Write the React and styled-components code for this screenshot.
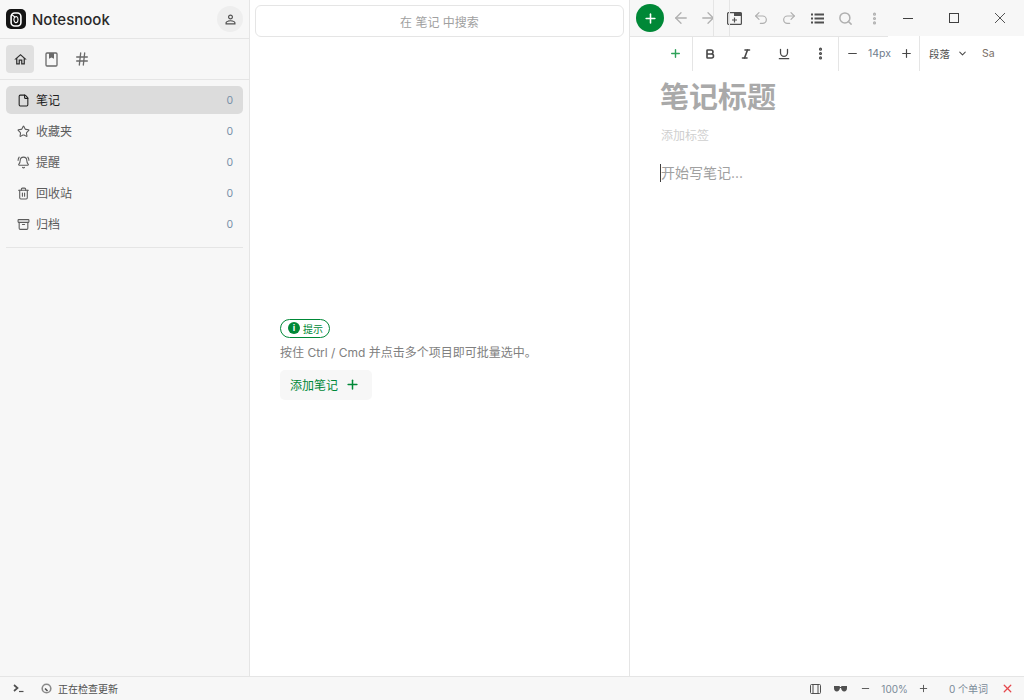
import React from 'react'
import styled, { createGlobalStyle } from 'styled-components'
import {
  Plus, ArrowLeft, ArrowRight, Undo2, Redo2, Search, EllipsisVertical, Minus, X,
  Bold, Italic, Underline, ChevronDown, Hash, File, Star, BellRing, Trash2, Archive,
} from 'lucide-react'

const GlobalStyle = createGlobalStyle`
  html, body, #root { height: 100%; margin: 0; }
  body {
    font-family: Inter, "Noto Sans CJK SC", sans-serif;
    background: #fff;
    overflow: hidden;
  }
`

const Page = styled.div`
  display: grid;
  grid-template-rows: 1fr 24px;
  height: 700px;
  width: 1024px;
`

const Main = styled.div`
  display: grid;
  grid-template-columns: 250px 380px 394px;
  min-height: 0;
`

const Sidebar = styled.aside`
  background: #f7f7f7;
  border-right: 1px solid #e5e5e5;
  display: flex;
  flex-direction: column;
`

const Header = styled.div`
  height: 38px;
  border-bottom: 1px solid #e5e5e5;
  display: flex;
  align-items: center;
  padding: 0 6px 0 6px;
`

const Logo = styled.div`
  width: 20px;
  height: 20px;
  border-radius: 5px;
  background: #141414;
  display: flex;
  align-items: center;
  justify-content: center;
`

const Brand = styled.div`
  font-size: 15px;
  font-weight: 500;
  color: #2a2a2a;
  margin-left: 6px;
  flex: 1;
`

const Avatar = styled.div`
  width: 26px;
  height: 26px;
  border-radius: 50%;
  background: #eeeeee;
  color: #505050;
  display: flex;
  align-items: center;
  justify-content: center;
`

const Tabs = styled.div`
  height: 40px;
  border-bottom: 1px solid #e5e5e5;
  display: flex;
  align-items: center;
  padding: 0 6px;
  gap: 3px;
`

const Tab = styled.div`
  width: 28px;
  height: 28px;
  border-radius: 4px;
  background: ${({ $active }) => ($active ? '#e0e0e0' : 'transparent')};
  color: ${({ $active }) => ($active ? '#303030' : '#6a6a6a')};
  display: flex;
  align-items: center;
  justify-content: center;
`

const Nav = styled.nav`
  margin: 6px 6px 0;
  padding-bottom: 9px;
  border-bottom: 1px solid #e5e5e5;
  display: flex;
  flex-direction: column;
  gap: 3px;
`

const NavRow = styled.div`
  height: 28px;
  border-radius: 5px;
  background: ${({ $active }) => ($active ? '#dcdcdc' : 'transparent')};
  color: ${({ $active }) => ($active ? '#202020' : '#5c5c5c')};
  display: flex;
  align-items: center;
  padding: 0 10px 0 11px;
  font-size: 12px;
  gap: 6px;
`

const NavIcon = styled.span`
  width: 13px;
  display: flex;
  justify-content: center;
`

const NavLabel = styled.span`
  flex: 1;
  padding-bottom: 2px;
`

const Count = styled.span`
  font-size: 10.5px;
  color: #7890a8;
`

const ListPane = styled.section`
  border-right: 1px solid #e5e5e5;
  display: flex;
  flex-direction: column;
`

const SearchBox = styled.div`
  margin: 5px 5px 0;
  height: 30px;
  border: 1px solid #e5e5e5;
  border-radius: 6px;
  display: flex;
  align-items: center;
  justify-content: center;
  font-size: 12px;
  color: #a0a0a0;
`

const Hint = styled.div`
  flex: 1;
  display: flex;
  flex-direction: column;
  align-items: flex-start;
  justify-content: center;
  padding: 0 30px 0;
  margin-top: 5px;
`

const Badge = styled.div`
  height: 17px;
  border: 1px solid #008837;
  border-radius: 10px;
  padding: 0 6px 0 7px;
  display: flex;
  align-items: center;
  gap: 3px;
  font-size: 10px;
  color: #008837;
`

const InfoDot = styled.span`
  width: 12px;
  height: 12px;
  border-radius: 50%;
  background: #008837;
  color: #fff;
  font-size: 9px;
  font-weight: 700;
  line-height: 12px;
  text-align: center;
`

const HintText = styled.p`
  margin: 7px 0 9px;
  font-size: 12px;
  line-height: 16px;
  color: #808080;
`

const AddButton = styled.div`
  height: 30px;
  padding: 0 12px 0 10px;
  background: #f7f7f7;
  border-radius: 5px;
  display: flex;
  align-items: center;
  gap: 7px;
  font-size: 12px;
  color: #008837;
`

const Editor = styled.section`
  display: flex;
  flex-direction: column;
  position: relative;
`

const TopBar = styled.div`
  height: 36px;
  background: #f7f7f7;
  display: flex;
  align-items: center;
  padding-left: 6px;
`

const NewNote = styled.div`
  width: 28px;
  height: 28px;
  flex-shrink: 0;
  border-radius: 50%;
  background: #008837;
  color: #fff;
  display: flex;
  align-items: center;
  justify-content: center;
  margin-right: 3px;
`

const ToolGroup = styled.div`
  width: 258px;
  height: 37px;
  flex-shrink: 0;
  display: flex;
  align-items: center;
  border-bottom: 1px solid #e5e5e5;
  align-self: flex-start;
  margin-left: -37px;
  padding-left: 37px;
  box-sizing: border-box;
`

const TopIcon = styled.div`
  width: ${({ $w }) => $w || 28}px;
  display: flex;
  justify-content: center;
  color: ${({ $dark }) => ($dark ? '#505050' : '#b0b0b0')};
`

const Rails = styled.div`
  position: absolute;
  left: 83px;
  top: 0;
  width: 15px;
  height: 36px;
  border-left: 1px solid #e5e5e5;
  border-right: 1px solid #e5e5e5;
`

const WinControls = styled.div`
  display: flex;
  flex-shrink: 0;
  margin-left: -3px;
`

const WinButton = styled.div`
  width: 46px;
  height: 36px;
  display: flex;
  align-items: center;
  justify-content: center;
  color: #404040;
`

const FormatBar = styled.div`
  height: 35px;
  display: flex;
  align-items: center;
  font-size: 10.5px;
  color: #505050;
`

const FormatGroup = styled.div`
  height: 100%;
  display: flex;
  align-items: center;
  width: ${({ $w }) => $w}px;
  border-right: ${({ $end }) => ($end ? 'none' : '1px solid #e5e5e5')};
  padding-left: ${({ $pad }) => $pad || 0}px;
  box-sizing: border-box;
`

const FormatIcon = styled.div`
  width: ${({ $w }) => $w || 37}px;
  display: flex;
  justify-content: center;
  color: ${({ $green }) => ($green ? '#2fa25a' : '#484848')};
`

const SizeLabel = styled.span`
  width: 28px;
  text-align: center;
  color: #6f7c8c;
`

const FontLabel = styled.span`
  margin-left: 8px;
  color: #7a6f68;
`

const Body = styled.div`
  padding: 8px 30px 0;
  display: flex;
  flex-direction: column;
  align-items: flex-start;
`

const Title = styled.h1`
  margin: 0;
  font-size: 29px;
  line-height: 38px;
  font-weight: 700;
  color: #a9a9a9;
`

const Tags = styled.div`
  margin: 11px 0 0 1px;
  font-size: 12px;
  line-height: 16px;
  color: #cfcfcf;
`

const Placeholder = styled.div`
  margin-top: 20px;
  font-size: 14px;
  line-height: 18px;
  color: #a0a0a0;
  border-left: 1px solid #404040;
`

const StatusBar = styled.footer`
  background: #f7f7f7;
  border-top: 1px solid #e5e5e5;
  box-sizing: border-box;
  display: flex;
  align-items: center;
  padding: 0 10px 0 13px;
  font-size: 10px;
  color: #505050;
`

const StatusItem = styled.div`
  display: flex;
  align-items: center;
  gap: 6px;
  margin-left: ${({ $gap }) => $gap || 0}px;
  color: ${({ $tone }) => $tone || 'inherit'};
`

const Spacer = styled.div`
  flex: 1;
`

const navItems = [
  { label: '笔记', icon: File, active: true },
  { label: '收藏夹', icon: Star },
  { label: '提醒', icon: BellRing },
  { label: '回收站', icon: Trash2 },
  { label: '归档', icon: Archive },
]

const HomeIcon = () => (
  <svg width="15" height="15" viewBox="0 0 24 24" fill="currentColor">
    <path d="M12 5.69l5 4.5V18h-2v-6H9v6H7v-7.81l5-4.5M12 3L2 12h3v8h6v-6h2v6h6v-8h3L12 3z" />
  </svg>
)

const PersonIcon = () => (
  <svg width="15" height="15" viewBox="0 0 24 24" fill="currentColor">
    <path d="M12 5.9a2.1 2.1 0 110 4.2 2.1 2.1 0 010-4.2m0 9c2.97 0 6.1 1.46 6.1 2.1v1.1H5.9V17c0-.64 3.13-2.1 6.1-2.1M12 4C9.79 4 8 5.79 8 8s1.79 4 4 4 4-1.79 4-4-1.79-4-4-4zm0 9c-2.67 0-8 1.34-8 4v3h16v-3c0-2.66-5.33-4-8-4z" />
  </svg>
)

const BookIcon = () => (
  <svg width="13" height="15" viewBox="0 0 13 15" fill="none" stroke="currentColor" strokeWidth="1.3">
    <rect x="1" y="1" width="11" height="13" rx="1" />
    <path d="M4 1h5v5.8L6.500 5.500 4 6.800z" fill="currentColor" stroke="none" />
  </svg>
)

const TabPlusIcon = () => (
  <svg width="15" height="13" viewBox="0 0 15 13" fill="none" stroke="currentColor" strokeWidth="1.2">
    <rect x="0.6" y="0.6" width="13.800" height="11.800" rx="1" />
    <path d="M7 0.600h7.400V4H7z" fill="currentColor" stroke="none" />
    <path d="M7.500 5.500v5M5 8h5" />
  </svg>
)

const BulletListIcon = () => (
  <svg width="13" height="11" viewBox="0 0 13 11" fill="currentColor">
    <rect x="0" y="0.500" width="2" height="2" />
    <rect x="3.500" y="0.500" width="9.500" height="2" />
    <rect x="0" y="4.500" width="2" height="2" />
    <rect x="3.500" y="4.500" width="9.500" height="2" />
    <rect x="0" y="8.500" width="2" height="2" />
    <rect x="3.500" y="8.500" width="9.500" height="2" />
  </svg>
)

const LogoMark = () => (
  <svg width="12" height="15" viewBox="0 0 12 15" fill="none" stroke="#fff">
    <rect x="1.100" y="1" width="9.800" height="13" rx="3.500" strokeWidth="1.600" />
    <path d="M1.500 2.500L5 5c-1.500 1-1.500 4 0 5.200 1.500 1 3 0 3-2.700S6.500 4 5 5" strokeWidth="1.100" />
  </svg>
)

const WinMin = () => (
  <svg width="10" height="10" viewBox="0 0 10 10" stroke="currentColor" shapeRendering="crispEdges">
    <path d="M0 5.500h10" />
  </svg>
)

const WinMax = () => (
  <svg width="10" height="10" viewBox="0 0 10 10" fill="none" stroke="currentColor" shapeRendering="crispEdges">
    <rect x="0.500" y="0.500" width="9" height="9" />
  </svg>
)

const WinClose = () => (
  <svg width="10" height="10" viewBox="0 0 10 10" fill="none" stroke="currentColor" strokeWidth="0.9">
    <path d="M0 0l10 10M10 0L0 10" />
  </svg>
)

const ConsoleIcon = () => (
  <svg width="11" height="9" viewBox="0 0 11 9" fill="none" stroke="currentColor" strokeWidth="1.700">
    <path d="M1 1l3.500 3L1 7" />
    <path d="M6 7.500h4.500" strokeWidth="1.200" />
  </svg>
)

const UpdateIcon = () => (
  <svg width="11" height="11" viewBox="0 0 11 11" fill="none" stroke="#8a8a8a" strokeWidth="1.600">
    <circle cx="5.500" cy="5.500" r="4.300" />
    <path d="M4 5.500l2.500 2.500" stroke="#505050" />
  </svg>
)

const PaneIcon = () => (
  <svg width="11" height="10" viewBox="0 0 11 10" fill="none" stroke="currentColor">
    <rect x="0.500" y="0.500" width="10" height="9" rx="1" />
    <path d="M3 1v8M8 1v8" />
  </svg>
)

const ShadesIcon = () => (
  <svg width="13" height="7" viewBox="0 0 13 7" fill="currentColor">
    <path d="M0 1h5.500l.5 1h1l.5-1H13v2c0 2-1 3.500-2.800 3.500S7.500 5 7 3H6C5.500 5 4.600 6.500 2.800 6.500S0 5 0 3z" />
  </svg>
)

const App = () => {
  return (
    <Page>
      <GlobalStyle />
      <Main>
        <Sidebar>
          <Header>
            <Logo><LogoMark /></Logo>
            <Brand>Notesnook</Brand>
            <Avatar><PersonIcon /></Avatar>
          </Header>
          <Tabs>
            <Tab $active><HomeIcon /></Tab>
            <Tab><BookIcon /></Tab>
            <Tab><Hash size={16} /></Tab>
          </Tabs>
          <Nav>
            {navItems.map(({ label, icon: Icon, active }) => (
              <NavRow key={label} $active={active}>
                <NavIcon><Icon size={13} /></NavIcon>
                <NavLabel>{label}</NavLabel>
                <Count>0</Count>
              </NavRow>
            ))}
          </Nav>
        </Sidebar>
        <ListPane>
          <SearchBox>在 笔记 中搜索</SearchBox>
          <Hint>
            <Badge><InfoDot>i</InfoDot>提示</Badge>
            <HintText>按住 Ctrl / Cmd 并点击多个项目即可批量选中。</HintText>
            <AddButton>添加笔记<Plus size={15} strokeWidth={2.4} /></AddButton>
          </Hint>
        </ListPane>
        <Editor>
          <TopBar>
            <NewNote><Plus size={15} strokeWidth={2.5} /></NewNote>
            <ToolGroup>
              <TopIcon><ArrowLeft size={18} strokeWidth={1.7} /></TopIcon>
              <TopIcon $w={26}><ArrowRight size={18} strokeWidth={1.7} /></TopIcon>
              <TopIcon $w={26} $dark><TabPlusIcon /></TopIcon>
              <TopIcon><Undo2 size={16} strokeWidth={1.8} /></TopIcon>
              <TopIcon><Redo2 size={16} strokeWidth={1.8} /></TopIcon>
              <TopIcon $dark><BulletListIcon /></TopIcon>
              <TopIcon $w={29}><Search size={15} strokeWidth={2.4} /></TopIcon>
              <TopIcon><EllipsisVertical size={15} strokeWidth={3} /></TopIcon>
            </ToolGroup>
            <WinControls>
              <WinButton><WinMin /></WinButton>
              <WinButton><WinMax /></WinButton>
              <WinButton><WinClose /></WinButton>
            </WinControls>
          </TopBar>
          <Rails />
          <FormatBar>
            <FormatGroup $w={63} $pad={28}>
              <FormatIcon $green $w={34}><Plus size={13} strokeWidth={2.6} /></FormatIcon>
            </FormatGroup>
            <FormatGroup $w={146}>
              <FormatIcon $w={35}><Bold size={12} strokeWidth={3.2} /></FormatIcon>
              <FormatIcon $w={37}><Italic size={12} strokeWidth={3.2} /></FormatIcon>
              <FormatIcon $w={39}><Underline size={14} strokeWidth={2.2} /></FormatIcon>
              <FormatIcon $w={35}><EllipsisVertical size={15} strokeWidth={3} /></FormatIcon>
            </FormatGroup>
            <FormatGroup $w={81}>
              <FormatIcon $w={27}><Minus size={13} strokeWidth={2.2} /></FormatIcon>
              <SizeLabel>14px</SizeLabel>
              <FormatIcon $w={26}><Plus size={13} strokeWidth={2.2} /></FormatIcon>
            </FormatGroup>
            <FormatGroup $w={104} $end $pad={9}>
              <span>段落</span>
              <FormatIcon $w={24}><ChevronDown size={11} strokeWidth={2.2} /></FormatIcon>
              <FontLabel>Sa</FontLabel>
            </FormatGroup>
          </FormatBar>
          <Body>
            <Title>笔记标题</Title>
            <Tags>添加标签</Tags>
            <Placeholder>开始写笔记...</Placeholder>
          </Body>
        </Editor>
      </Main>
      <StatusBar>
        <StatusItem><ConsoleIcon /></StatusItem>
        <StatusItem $gap={17}><UpdateIcon />正在检查更新</StatusItem>
        <Spacer />
        <StatusItem><PaneIcon /></StatusItem>
        <StatusItem $gap={13}><ShadesIcon /></StatusItem>
        <StatusItem $gap={13}><Minus size={11} /></StatusItem>
        <StatusItem $gap={10} $tone="#7a8a98">100%</StatusItem>
        <StatusItem $gap={10}><Plus size={11} /></StatusItem>
        <StatusItem $gap={20} $tone="#7a8a98">0 个单词</StatusItem>
        <StatusItem $gap={13} $tone="#e5484d"><X size={13} strokeWidth={2.4} /></StatusItem>
      </StatusBar>
    </Page>
  )
}

export default App
